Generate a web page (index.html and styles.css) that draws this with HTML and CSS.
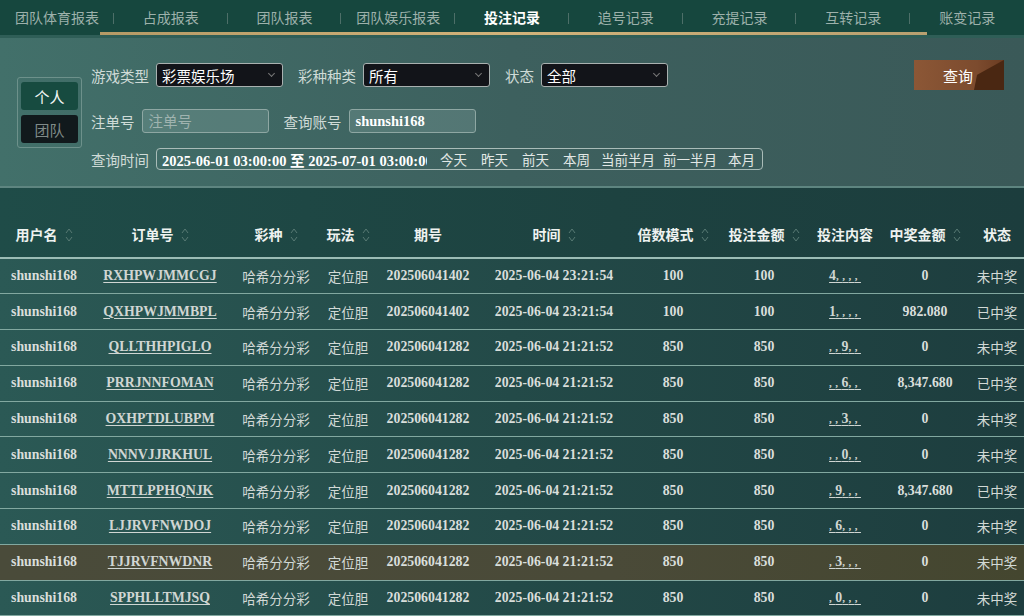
FILE: index.html
```html
<!DOCTYPE html>
<html lang="zh-CN">
<head>
    <meta charset="UTF-8">
    <title>投注记录</title>
    <link rel="stylesheet" href="styles.css">
</head>
<body>

<!-- Tab menu -->
<div class="tabs">
    <a class="tab">团队体育报表</a>
    <a class="tab">占成报表</a>
    <a class="tab">团队报表</a>
    <a class="tab">团队娱乐报表</a>
    <a class="tab active">投注记录</a>
    <a class="tab">追号记录</a>
    <a class="tab">充提记录</a>
    <a class="tab">互转记录</a>
    <a class="tab last">账变记录</a>
</div>

<!-- Filter -->
<div class="filter">
    <div class="switch">
        <button class="switch-btn on">个人</button>
        <button class="switch-btn">团队</button>
    </div>

    <div class="fields">
        <div class="field-row">
            <label>游戏类型</label>
            <div class="select"><span>彩票娱乐场</span><i class="caret"></i></div>
            <label>彩种种类</label>
            <div class="select"><span>所有</span><i class="caret"></i></div>
            <label>状态</label>
            <div class="select"><span>全部</span><i class="caret"></i></div>
        </div>
        <div class="field-row row2">
            <label>注单号</label>
            <div class="input placeholder">注单号</div>
            <label>查询账号</label>
            <div class="input value">shunshi168</div>
        </div>
        <div class="field-row row3">
            <label>查询时间</label>
            <div class="date-box">
                <div class="date-text">2025-06-01 03:00:00 <span class="zh">至</span> 2025-07-01 03:00:00</div>
                <a>今天</a><a>昨天</a><a>前天</a><a>本周</a><a class="wide">当前半月</a><a class="wide">前一半月</a><a>本月</a>
            </div>
        </div>
    </div>

    <button class="query-btn">查询</button>
</div>

<!-- Records -->
<table class="records">
    <colgroup>
        <col style="width:88px"><col style="width:144px"><col style="width:88px"><col style="width:56px">
        <col style="width:104px"><col style="width:148px"><col style="width:90px"><col style="width:92px">
        <col style="width:70px"><col style="width:90px"><col style="width:54px">
    </colgroup>
    <thead>
        <tr>
            <th>用户名<i class="sort"></i></th>
            <th>订单号<i class="sort"></i></th>
            <th>彩种<i class="sort"></i></th>
            <th>玩法<i class="sort"></i></th>
            <th>期号</th>
            <th>时间<i class="sort"></i></th>
            <th>倍数模式<i class="sort"></i></th>
            <th>投注金额<i class="sort"></i></th>
            <th>投注内容</th>
            <th>中奖金额<i class="sort"></i></th>
            <th>状态</th>
        </tr>
    </thead>
    <tbody id="rows"></tbody>
</table>

<script>
    const data = [
        ['RXHPWJMMCGJ', '202506041402', '2025-06-04 23:21:54', '100', '4,,,,', '0', '未中奖'],
        ['QXHPWJMMBPL', '202506041402', '2025-06-04 23:21:54', '100', '1,,,,', '982.080', '已中奖'],
        ['QLLTHHPIGLO', '202506041282', '2025-06-04 21:21:52', '850', ',,9,,', '0', '未中奖'],
        ['PRRJNNFOMAN', '202506041282', '2025-06-04 21:21:52', '850', ',,6,,', '8,347.680', '已中奖'],
        ['OXHPTDLUBPM', '202506041282', '2025-06-04 21:21:52', '850', ',,3,,', '0', '未中奖'],
        ['NNNVJJRKHUL', '202506041282', '2025-06-04 21:21:52', '850', ',,0,,', '0', '未中奖'],
        ['MTTLPPHQNJK', '202506041282', '2025-06-04 21:21:52', '850', ',9,,,', '8,347.680', '已中奖'],
        ['LJJRVFNWDOJ', '202506041282', '2025-06-04 21:21:52', '850', ',6,,,', '0', '未中奖'],
        ['TJJRVFNWDNR', '202506041282', '2025-06-04 21:21:52', '850', ',3,,,', '0', '未中奖'],
        ['SPPHLLTMJSQ', '202506041282', '2025-06-04 21:21:52', '850', ',0,,,', '0', '未中奖']
    ];

    // 投注内容: 数字正常大小, 逗号小号
    function content(txt) {
        return txt.split('').map(c => c === ',' ? '<small>,</small>' : c).join('');
    }

    const tbody = document.getElementById('rows');
    data.forEach((d, i) => {
        const tr = document.createElement('tr');
        if (i === 8) tr.className = 'hover';
        tr.innerHTML =
            '<td class="num">shunshi168</td>' +
            '<td class="num"><a>' + d[0] + '</a></td>' +
            '<td class="zh">哈希分分彩</td>' +
            '<td class="zh">定位胆</td>' +
            '<td class="num">' + d[1] + '</td>' +
            '<td class="num">' + d[2] + '</td>' +
            '<td class="num">' + d[3] + '</td>' +
            '<td class="num">' + d[3] + '</td>' +
            '<td class="num"><a class="bet">' + content(d[4]) + '</a></td>' +
            '<td class="num">' + d[5] + '</td>' +
            '<td class="zh">' + d[6] + '</td>';
        tbody.appendChild(tr);
    });
</script>

</body>
</html>
```

FILE: styles.css
```css
body {
    margin: 0;
    width: 1024px;
    height: 616px;
    overflow: hidden;
    background: #1f4343;
    font-family: "Noto Sans CJK SC", "Noto Sans", sans-serif;
    color: #d6dcd8;
}

/* tabs */
.tabs {
    position: relative;
    display: flex;
    height: 35px;
    background: #16473e;
    border-bottom: 3px solid #2f5e57;
}
.tabs::after {
    content: "";
    position: absolute;
    left: 100px;
    width: 827px;
    bottom: 0;
    height: 3px;
    background: linear-gradient(90deg, #b59a66, #d2b37a 50%, #b8a070);
}
.tab {
    flex: 1;
    position: relative;
    line-height: 35px;
    text-align: center;
    font-size: 14px;
    color: #9db1ab;
}
.tab::after {
    content: "";
    position: absolute;
    right: 0;
    top: 13px;
    width: 1px;
    height: 11px;
    background: #4d6f68;
}
.tab.last::after {
    display: none;
}
.tab.active {
    color: #fff;
    font-weight: bold;
}

/* filter */
.filter {
    display: flex;
    align-items: flex-start;
    height: 150px;
    box-sizing: border-box;
    padding: 25px 20px 0 17px;
    background: linear-gradient(90deg, #42706a, #3d605e 50%, #3a5958);
    border-bottom: 2px solid #5e8580;
}
.switch {
    margin-top: 14px;
    width: 65px;
    height: 71px;
    box-sizing: border-box;
    padding: 4px 3px;
    border: 1px solid #6d918b;
    border-radius: 3px;
    display: flex;
    flex-direction: column;
    gap: 5px;
}
.switch-btn {
    height: 28px;
    border: none;
    border-radius: 3px;
    font-family: inherit;
    font-size: 15px;
    color: #7f8a88;
    background: #11191c;
    padding: 0;
}
.switch-btn.on {
    background: #174b40;
    color: #f2f6f4;
}
.fields {
    margin-left: 9px;
    flex: 1;
}
.field-row {
    display: flex;
    align-items: center;
    height: 24px;
}
.field-row label {
    font-size: 14.5px;
    color: #cfdbd7;
    margin-right: 7px;
}
.row2 {
    margin-top: 22px;
}
.row3 {
    margin-top: 15px;
    height: 22px;
}
.select {
    width: 127px;
    height: 24px;
    box-sizing: border-box;
    margin-right: 15px;
    padding: 0 8px 0 5px;
    background: #121419;
    border: 1px solid #a9b1b0;
    border-radius: 3px;
    display: flex;
    align-items: center;
    justify-content: space-between;
    font-size: 14.5px;
    color: #fff;
}
.caret {
    width: 4px;
    height: 4px;
    border-right: 1px solid #777;
    border-bottom: 1px solid #777;
    transform: rotate(45deg);
    margin-top: -4px;
}
.input {
    width: 127px;
    height: 24px;
    box-sizing: border-box;
    margin-right: 15px;
    padding: 0 6px;
    background: rgba(150, 185, 180, 0.25);
    border: 1px solid #8ea7a3;
    border-radius: 3px;
    line-height: 22px;
    font-size: 14.5px;
}
.input.placeholder {
    color: #9fb3af;
}
.input.value {
    color: #fff;
    font-family: "Liberation Serif", serif;
    font-weight: bold;
    font-size: 14.5px;
}
.date-box {
    width: 607px;
    height: 22px;
    box-sizing: border-box;
    border: 1px solid #a9bcb8;
    border-radius: 4px;
    display: flex;
    align-items: center;
    padding-left: 5px;
    font-size: 13.5px;
    white-space: nowrap;
}
.date-text {
    flex: none;
    width: 265px;
    overflow: hidden;
    font-family: "Liberation Serif", serif;
    font-weight: bold;
    font-size: 14.5px;
    color: #fff;
    margin-right: 6px;
}
.date-text .zh {
    font-family: "Noto Sans CJK SC", sans-serif;
}
.date-box a {
    flex: none;
    color: #e2e8e6;
    padding: 0 7px;
}
.date-box a.wide {
    padding: 0 4px;
}
.query-btn {
    margin-left: auto;
    margin-top: -3px;
    width: 90px;
    height: 30px;
    border: none;
    color: #fff;
    font-family: inherit;
    font-size: 15px;
    padding: 0 2px 0 0;
    background: linear-gradient(90deg, #8c5736, #7c4b2e 70%, #6a3c22);
    position: relative;
}
.query-btn::before {
    content: "";
    position: absolute;
    right: 0;
    top: 0;
    width: 30px;
    height: 30px;
    background: #663a20;
    clip-path: polygon(100% 0, 100% 50%, 10% 50%);
}
.query-btn::after {
    content: "";
    position: absolute;
    right: 0;
    top: 0;
    width: 30px;
    height: 30px;
    background: #4a2712;
    clip-path: polygon(100% 0, 100% 100%, 0 100%, 10% 50%);
}

/* table */
.records {
    width: 1024px;
    table-layout: fixed;
    border-collapse: collapse;
    background: linear-gradient(90deg, #2b5955, #234a48 50%, #1d3d3e);
}
.records thead tr {
    background: linear-gradient(90deg, #1f4c48, #1d4240 60%, #1c3d3d);
}
.records th {
    height: 70px;
    box-sizing: border-box;
    padding: 0 0 13px;
    vertical-align: bottom;
    font-size: 14px;
    font-weight: bold;
    color: #eef2f0;
    white-space: nowrap;
    border-bottom: 2px solid #9bbcb5;
}
.sort {
    display: inline-block;
    width: 8px;
    height: 16px;
    margin-left: 7px;
    vertical-align: -3px;
    background: url("data:image/svg+xml,%3Csvg xmlns='http://www.w3.org/2000/svg' width='8' height='16'%3E%3Cpath d='M1 6 L4 2 L7 6 M1 10 L4 14 L7 10' fill='none' stroke='%23587a74' stroke-width='1'/%3E%3C/svg%3E");
}
.records td {
    height: 35.8px;
    box-sizing: border-box;
    padding: 0;
    text-align: center;
    white-space: nowrap;
    border-bottom: 1px solid #82a8a0;
    color: #d9dedb;
}
.records td.num {
    font-family: "Liberation Serif", serif;
    font-weight: bold;
    font-size: 13.8px;
}
.records td.zh {
    font-size: 13.5px;
    color: #d2d9d6;
}
.records td a {
    text-decoration: underline;
    text-underline-offset: 2px;
    color: #d0d6d3;
}
.bet small {
    font-size: 11px;
    letter-spacing: 3.5px;
}
.records tr.hover {
    background: linear-gradient(90deg, #4a4b3a, #4a4a38 60%, #44462f);
}
```
